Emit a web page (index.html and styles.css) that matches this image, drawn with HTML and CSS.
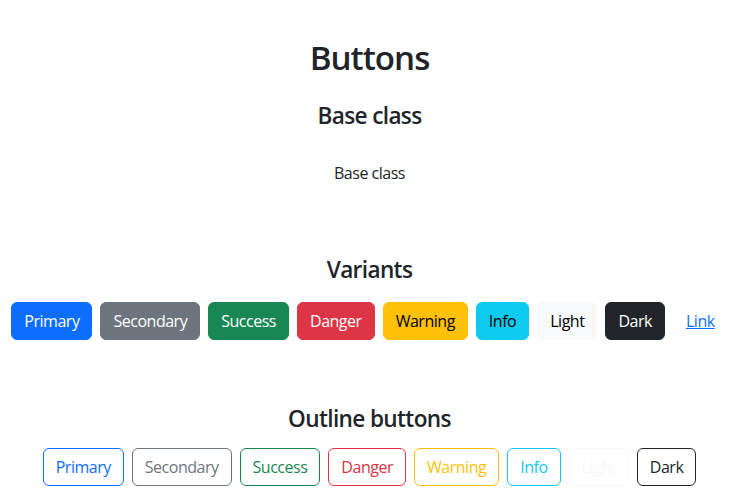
FILE: index.html
```html
<!DOCTYPE html>
<html lang="en">
<head>
<meta charset="utf-8">
<title>Buttons</title>
<link rel="stylesheet" href="styles.css">
</head>
<body>
<main class="page">
  <h1 class="title">Buttons</h1>

  <section class="section section-first">
    <h4 class="section-title">Base class</h4>
    <div class="demo demo-base">
      <button class="btn" type="button">Base class</button>
    </div>
  </section>

  <section class="section">
    <h4 class="section-title">Variants</h4>
    <div class="demo demo-variants">
      <button class="btn btn-primary" type="button">Primary</button>
      <button class="btn btn-secondary" type="button">Secondary</button>
      <button class="btn btn-success" type="button">Success</button>
      <button class="btn btn-danger" type="button">Danger</button>
      <button class="btn btn-warning" type="button">Warning</button>
      <button class="btn btn-info" type="button">Info</button>
      <button class="btn btn-light" type="button">Light</button>
      <button class="btn btn-dark" type="button">Dark</button>
      <button class="btn btn-link" type="button">Link</button>
    </div>
  </section>

  <section class="section section-outline">
    <h4 class="section-title">Outline buttons</h4>
    <div class="demo demo-outline">
      <button class="btn btn-outline-primary" type="button">Primary</button>
      <button class="btn btn-outline-secondary" type="button">Secondary</button>
      <button class="btn btn-outline-success" type="button">Success</button>
      <button class="btn btn-outline-danger" type="button">Danger</button>
      <button class="btn btn-outline-warning" type="button">Warning</button>
      <button class="btn btn-outline-info" type="button">Info</button>
      <button class="btn btn-outline-light" type="button">Light</button>
      <button class="btn btn-outline-dark" type="button">Dark</button>
    </div>
  </section>
</main>
</body>
</html>
```

FILE: styles.css
```css
* { box-sizing: border-box; }

html, body {
  margin: 0;
  padding: 0;
  background: #fff;
}

body {
  font-family: "Open Sans", "Noto Sans", sans-serif;
  font-size: 16px;
  line-height: 1.5;
  color: #212529;
}

.page {
  padding: 38px 5px 0 0;
  text-align: center;
}

.title {
  margin: 0 0 24px;
  font-size: 33.16px;
  font-weight: 600;
  line-height: 1.2;
  letter-spacing: -0.03em;
}

.section { margin-top: 64px; }
.section-first { margin-top: 0; }
.section-outline { margin-top: 65px; }

.section-title {
  margin: 0 0 16px;
  font-size: 22.6px;
  font-weight: 600;
  line-height: 1.2;
  letter-spacing: -0.028em;
}

.demo {
  display: flex;
  flex-wrap: wrap;
  justify-content: center;
  gap: 8px;
}
.demo-base { padding-top: 9px; }
.demo-variants { padding-top: 3px; }

.btn {
  display: inline-block;
  padding: 6px 12px;
  font-family: inherit;
  font-size: 16px;
  font-weight: 400;
  line-height: 24px;
  color: #212529;
  background: transparent;
  border: 1px solid transparent;
  border-radius: 6px;
  letter-spacing: -0.03em;
  cursor: pointer;
}

.btn-primary   { color: #fff; background: #0d6efd; border-color: #0d6efd; }
.btn-secondary { color: #fff; background: #6c757d; border-color: #6c757d; }
.btn-success   { color: #fff; background: #198754; border-color: #198754; }
.btn-danger    { color: #fff; background: #dc3545; border-color: #dc3545; }
.btn-warning   { color: #000; background: #ffc107; border-color: #ffc107; }
.btn-info      { color: #000; background: #0dcaf0; border-color: #0dcaf0; }
.btn-light     { color: #000; background: #f8f9fa; border-color: #f8f9fa; }
.btn-dark      { color: #fff; background: #212529; border-color: #212529; }
.btn-link      { color: #0d6efd; text-decoration: underline; }

.btn-outline-primary   { color: #0d6efd; border-color: #0d6efd; }
.btn-outline-secondary { color: #6c757d; border-color: #6c757d; }
.btn-outline-success   { color: #198754; border-color: #198754; }
.btn-outline-danger    { color: #dc3545; border-color: #dc3545; }
.btn-outline-warning   { color: #ffc107; border-color: #ffc107; }
.btn-outline-info      { color: #0dcaf0; border-color: #0dcaf0; }
.btn-outline-light     { color: #f8f9fa; border-color: #f8f9fa; }
.btn-outline-dark      { color: #212529; border-color: #212529; }
```
